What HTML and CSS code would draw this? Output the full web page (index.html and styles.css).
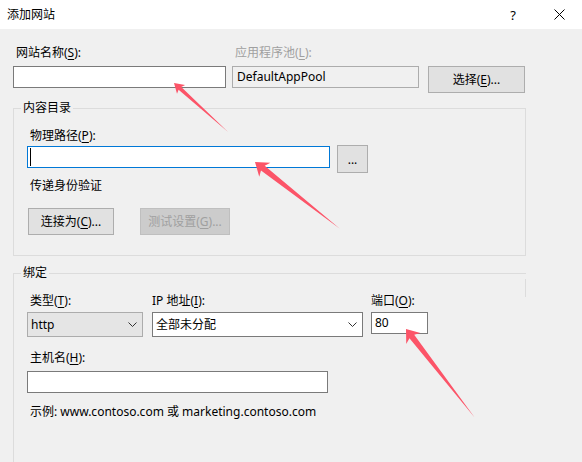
FILE: index.html
```html
<!DOCTYPE html>
<html lang="zh-CN">
<head>
  <meta charset="UTF-8">
  <title>添加网站</title>
  <link rel="stylesheet" href="styles.css">
</head>
<body>
  <div class="dialog">
    <header class="titlebar">
      <span class="title">添加网站</span>
      <span class="cap-btn help">?</span>
      <span class="cap-btn close">
        <svg width="11" height="11" viewBox="0 0 11 11"><path d="M0.5 0.5 L10.5 10.5 M10.5 0.5 L0.5 10.5" stroke="#000" stroke-width="1" fill="none"/></svg>
      </span>
    </header>

    <main class="client">
      <div class="site-row">
        <div class="field name-field">
          <label class="field-label">网站名称(<u>S</u>):</label>
          <div class="textbox"></div>
        </div>
        <div class="field pool-field">
          <label class="field-label disabled">应用程序池(<u>L</u>):</label>
          <div class="textbox readonly">DefaultAppPool</div>
        </div>
        <button class="btn pick-btn">选择(<u>E</u>)...</button>
      </div>

      <fieldset class="group content-group">
        <legend>内容目录</legend>
        <div class="group-body">
          <label class="field-label path-label">物理路径(<u>P</u>):</label>
          <div class="path-row">
            <div class="textbox focused path-box"><span class="caret"></span></div>
            <button class="btn browse-btn">...</button>
          </div>
          <div class="plain-text auth-text">传递身份验证</div>
          <div class="btn-row">
            <button class="btn connect-btn">连接为(<u>C</u>)...</button>
            <button class="btn test-btn" disabled>测试设置(<u>G</u>)...</button>
          </div>
        </div>
      </fieldset>

      <fieldset class="group binding-group">
        <legend>绑定</legend>
        <div class="group-body">
          <div class="binding-row">
            <div class="field type-field">
              <label class="field-label">类型(<u>T</u>):</label>
              <div class="combo locked">
                <span>http</span>
                <svg width="9" height="5" viewBox="0 0 9 5"><path d="M0.5 0.5 L4.5 4.5 L8.5 0.5" stroke="#333" fill="none"/></svg>
              </div>
            </div>
            <div class="field ip-field">
              <label class="field-label">IP 地址(<u>I</u>):</label>
              <div class="combo">
                <span>全部未分配</span>
                <svg width="9" height="5" viewBox="0 0 9 5"><path d="M0.5 0.5 L4.5 4.5 L8.5 0.5" stroke="#333" fill="none"/></svg>
              </div>
            </div>
            <div class="field port-field">
              <label class="field-label">端口(<u>O</u>):</label>
              <div class="textbox">80</div>
            </div>
          </div>
          <label class="field-label host-label">主机名(<u>H</u>):</label>
          <div class="textbox host-box"></div>
          <div class="plain-text example-text">示例: www.contoso.com 或 marketing.contoso.com</div>
        </div>
      </fieldset>
    </main>

    <!-- callout arrows drawn on top of the dialog -->
    <svg class="callouts" width="582" height="462" viewBox="0 0 582 462">
      <polygon points="0,0 -9.5,-6 -8,-2 -73,0 -8,2 -9.5,6" transform="translate(174 83) rotate(-137.8)"/>
      <polygon points="0,0 -12.5,-9 -10,-3 -108,0 -10,3 -12.5,9" transform="translate(255 162) rotate(-141.8)"/>
      <polygon points="0,0 -12,-9 -9.5,-3 -112,0 -9.5,3 -12,9" transform="translate(406 329) rotate(-127.8)"/>
    </svg>
  </div>
</body>
</html>
```

FILE: styles.css
```css
html, body {
  margin: 0;
  padding: 0;
  background: #f0f0f0;
  font-family: "Noto Sans", "Noto Sans CJK SC", sans-serif;
  font-size: 12px;
  line-height: 16px;
  color: #000;
  overflow: hidden;
}
.dialog {
  position: relative;
  width: 582px;
  height: 462px;
  overflow: hidden;
}
u {
  text-decoration-thickness: 1px;
  text-underline-offset: 2px;
}

/* title bar */
.titlebar {
  display: flex;
  align-items: center;
  height: 29px;
  background: #fff;
}
.title {
  flex: 1;
  padding-left: 7px;
}
.cap-btn {
  width: 46px;
  height: 29px;
  display: flex;
  align-items: center;
  justify-content: center;
}
.cap-btn.help {
  font-size: 13px;
}

/* client area */
.client {
  padding: 16px 56px 0 13px;
}
.field-label {
  display: block;
  padding-left: 3px;
  white-space: nowrap;
}
.field-label.disabled {
  color: #a0a0a0;
}
.textbox {
  box-sizing: border-box;
  height: 22px;
  border: 1px solid #7a7a7a;
  background: #fff;
  padding: 2px 0 0 3px;
  line-height: 16px;
  position: relative;
}
.textbox.readonly {
  background: #f0f0f0;
  border-color: #acacac;
  padding-left: 4px;
}
.textbox.focused {
  border-color: #0078d7;
}
.caret {
  position: absolute;
  left: 2px;
  top: 1px;
  width: 1px;
  height: 18px;
  background: #000;
}
.btn {
  box-sizing: border-box;
  height: 27px;
  margin: 0;
  padding: 0;
  border: 1px solid #adadad;
  background: #e1e1e1;
  font: inherit;
  color: #000;
}
.btn:disabled {
  background: #cccccc;
  border-color: #bfbfbf;
  color: #a0a0a0;
}

/* website name / pool row */
.site-row {
  display: flex;
  align-items: flex-start;
}
.site-row .field-label {
  margin-bottom: 5px;
}
.name-field {
  width: 213px;
}
.pool-field {
  width: 187px;
  margin-left: 6px;
}
.pick-btn {
  width: 97px;
  margin: 21px 0 0 9px;
}

/* group boxes */
.group {
  margin: 0;
  padding: 0;
  min-width: 0;
  border: 1px solid #dcdcdc;
}
.group legend {
  margin-left: 7px;
  padding: 0 2px;
  line-height: 16px;
}
.group-body {
  padding: 12px 0 20px 13px;
}
.content-group {
  margin-top: 7px;
}
.path-label {
  margin-bottom: 2px;
}
.path-row {
  display: flex;
  align-items: flex-start;
}
.path-box {
  width: 303px;
}
.browse-btn {
  width: 31px;
  height: 28px;
  margin: -1px 0 0 7px;
  line-height: 28px;
}
.plain-text {
  padding-left: 3px;
}
.auth-text {
  margin-top: 5px;
}
.btn-row {
  display: flex;
  margin-top: 14px;
}
.connect-btn {
  width: 86px;
  margin-left: 1px;
}
.test-btn {
  width: 90px;
  margin-left: 26px;
}

/* bindings: the frame is only closed along a short stub on the right */
.binding-group {
  position: relative;
  margin-top: 9px;
  border-right: none;
  border-bottom: none;
}
.binding-group::after {
  content: "";
  position: absolute;
  right: 0;
  top: -2px;
  width: 1px;
  height: 18px;
  background: #dcdcdc;
}
.binding-group .group-body {
  padding-bottom: 80px;
}
.binding-row {
  display: flex;
  align-items: flex-start;
}
.binding-row .field-label {
  margin-bottom: 3px;
}
.type-field {
  width: 116px;
}
.ip-field {
  width: 211px;
  margin-left: 9px;
}
.ip-field .field-label,
.port-field .field-label {
  padding-left: 0;
}
.port-field {
  width: 57px;
  margin-left: 8px;
}
.combo {
  box-sizing: border-box;
  height: 25px;
  display: flex;
  align-items: center;
  justify-content: space-between;
  padding: 0 5px 0 3px;
  border: 1px solid #7a7a7a;
  background: #fff;
}
.combo.locked {
  background: #e5e5e5;
  border-color: #acacac;
}
.host-label {
  margin-top: 13px;
  margin-bottom: 5px;
}
.host-box {
  width: 301px;
}
.example-text {
  margin-top: 11px;
}

/* arrows */
.callouts {
  position: absolute;
  left: 0;
  top: 0;
  pointer-events: none;
}
.callouts polygon {
  fill: #fc5468;
}
```
